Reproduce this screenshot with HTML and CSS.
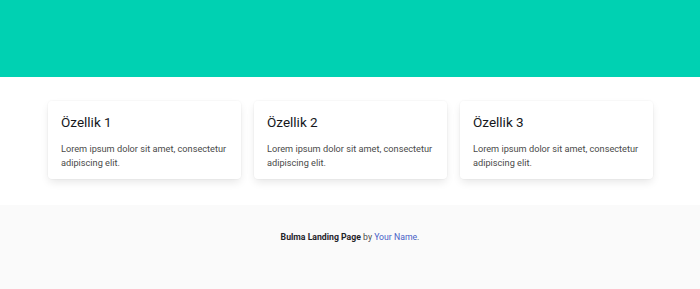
FILE: index.html
```html
<!DOCTYPE html>
<html lang="tr">
<head>
<meta charset="utf-8">
<title>Bulma Landing Page</title>
<link rel="stylesheet" href="styles.css">
</head>
<body>
<section class="hero"></section>
<section class="features">
  <div class="card">
    <h2 class="card-title">Özellik 1</h2>
    <p class="card-text">Lorem ipsum dolor sit amet, consectetur adipiscing elit.</p>
  </div>
  <div class="card">
    <h2 class="card-title">Özellik 2</h2>
    <p class="card-text">Lorem ipsum dolor sit amet, consectetur adipiscing elit.</p>
  </div>
  <div class="card">
    <h2 class="card-title">Özellik 3</h2>
    <p class="card-text">Lorem ipsum dolor sit amet, consectetur adipiscing elit.</p>
  </div>
</section>
<footer class="footer">
  <p><strong>Bulma Landing Page</strong> by <a href="#">Your Name</a>.</p>
</footer>
</body>
</html>
```
FILE: styles.css
```css
html, body {
  margin: 0;
  padding: 0;
  background: #fff;
}
body {
  font-family: Roboto, "Noto Sans", sans-serif;
  color: #4a4a4a;
  font-size: 8.7px;
  line-height: 1.5;
}
.hero {
  height: 77px;
  background: #00d1b2;
}
.features {
  display: flex;
  gap: 13px;
  padding: 24px 47px 26px 48px;
}
.card {
  flex: 1;
  background: #fff;
  border-radius: 4px;
  padding: 13px 13px 9px;
  box-shadow: 0 4px 9px -1px rgba(10, 10, 10, 0.1), 0 0 0 1px rgba(10, 10, 10, 0.02);
}
.card-title {
  margin: 0 0 12px;
  font-size: 13.5px;
  line-height: 16px;
  font-weight: 400;
  color: #15171b;
}
.card-text {
  margin: 0;
  font-size: 9.2px;
  line-height: 14px;
  color: #4a4a4a;
}
.footer {
  background: #fafafa;
  padding: 26px 13px 52px;
  text-align: center;
}
.footer p {
  margin: 0;
  line-height: 13px;
  color: #4a4a4a;
}
.footer strong {
  color: #1f2329;
  font-weight: 700;
}
.footer a {
  color: #485fc7;
  text-decoration: none;
}
```
